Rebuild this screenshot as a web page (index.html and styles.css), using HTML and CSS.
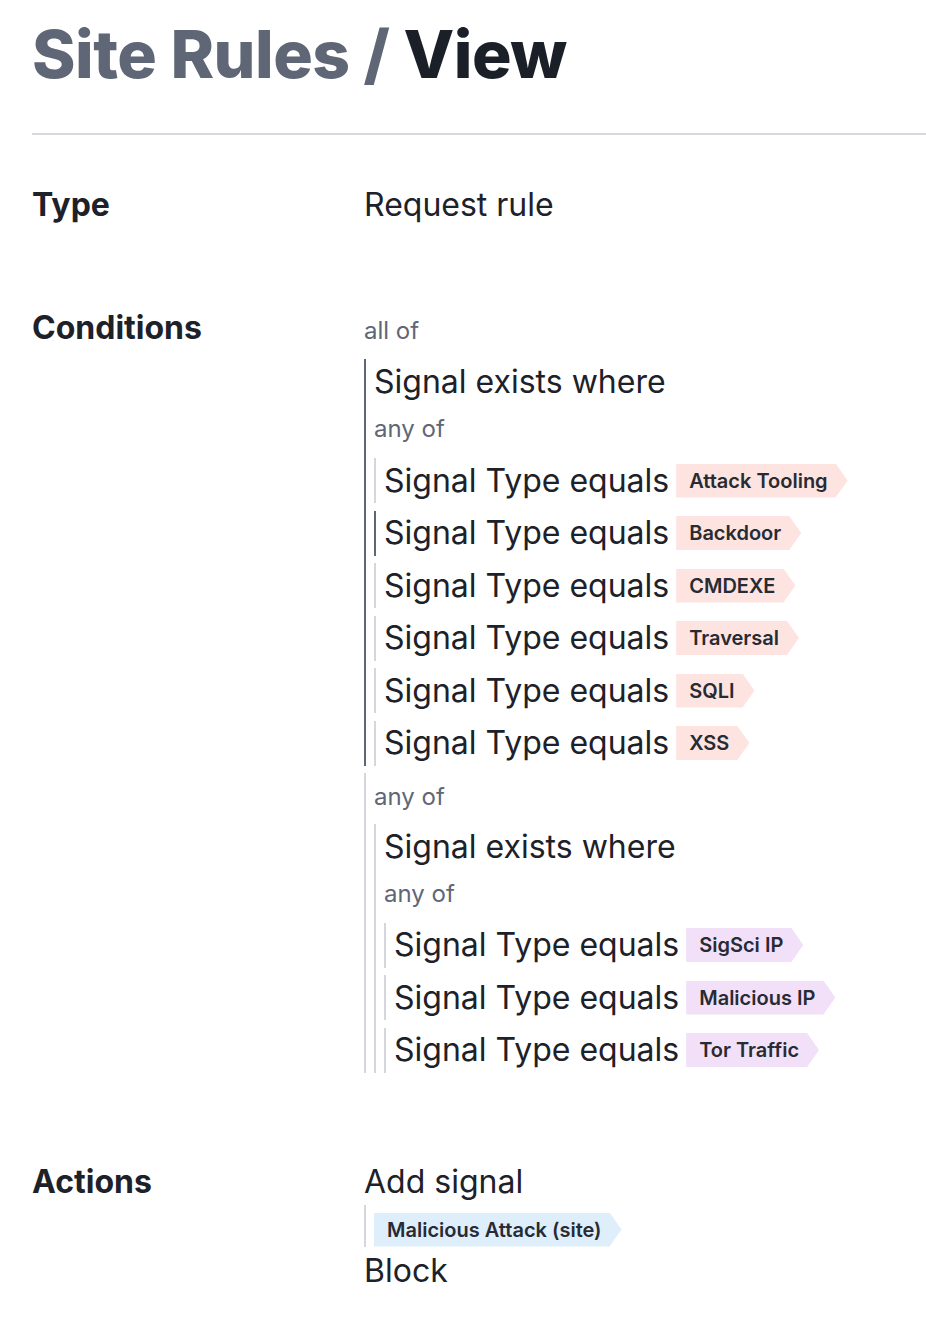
FILE: index.html
```html
<!DOCTYPE html>
<html lang="en">
<head>
<meta charset="utf-8">
<title>Site Rules / View</title>
<link rel="stylesheet" href="styles.css">
</head>
<body>
<div class="page">
  <h1 class="title"><span class="crumb">Site Rules / </span><span class="current">View</span></h1>
  <hr class="divider">

  <div class="row">
    <div class="label">Type</div>
    <div class="value"><div class="text">Request rule</div></div>
  </div>

  <div class="row">
    <div class="label">Conditions</div>
    <div class="value">
      <div class="op root">all of</div>
      <div class="list top">
        <div class="node dark">
          <div class="text">Signal exists where</div>
          <div class="op">any of</div>
          <div class="list">
            <div class="item"><span class="text">Signal Type equals</span><span class="tag pink">Attack Tooling</span></div>
            <div class="item dark"><span class="text">Signal Type equals</span><span class="tag pink">Backdoor</span></div>
            <div class="item"><span class="text">Signal Type equals</span><span class="tag pink">CMDEXE</span></div>
            <div class="item"><span class="text">Signal Type equals</span><span class="tag pink">Traversal</span></div>
            <div class="item"><span class="text">Signal Type equals</span><span class="tag pink">SQLI</span></div>
            <div class="item"><span class="text">Signal Type equals</span><span class="tag pink">XSS</span></div>
          </div>
        </div>
        <div class="node">
          <div class="op first">any of</div>
          <div class="list">
            <div class="node">
              <div class="text">Signal exists where</div>
              <div class="op">any of</div>
              <div class="list">
                <div class="item"><span class="text">Signal Type equals</span><span class="tag purple">SigSci IP</span></div>
                <div class="item"><span class="text">Signal Type equals</span><span class="tag purple">Malicious IP</span></div>
                <div class="item"><span class="text">Signal Type equals</span><span class="tag purple">Tor Traffic</span></div>
              </div>
            </div>
          </div>
        </div>
      </div>
    </div>
  </div>

  <div class="row last">
    <div class="label">Actions</div>
    <div class="value">
      <div class="text">Add signal</div>
      <div class="node action"><span class="tag blue">Malicious Attack (site)</span></div>
      <div class="text">Block</div>
    </div>
  </div>
</div>
</body>
</html>
```
FILE: styles.css
```css
html, body {
  margin: 0;
  padding: 0;
  background: #ffffff;
}

body {
  font-family: Inter, "Noto Sans", "Liberation Sans", sans-serif;
  color: #1d2129;
}

.page {
  padding: 14px 0 20px 32px;
}

.title {
  margin: 0;
  font-size: 66px;
  line-height: 80px;
  font-weight: 800;
  letter-spacing: -0.5px;
}

.crumb {
  color: #5f6676;
}

.current {
  color: #1b1f27;
}

.divider {
  border: 0;
  height: 2px;
  background: #d8d9de;
  margin: 39px 0 47px 0;
}

.row {
  display: flex;
  align-items: baseline;
  margin-bottom: 84px;
}

.row.last {
  padding-top: 2px;
  margin-bottom: 0;
}

.label {
  width: 332px;
  flex: none;
  font-size: 32px;
  line-height: 32px;
  font-weight: 700;
}

.value {
  flex: 1;
  min-width: 0;
}

.text {
  font-size: 32px;
  line-height: 46px;
  font-weight: 400;
  white-space: nowrap;
}

.op {
  font-size: 24px;
  line-height: 32px;
  color: #5f6676;
  margin: 8px 0 13px 0;
}

.op.root {
  margin: 0;
}

.op.first {
  margin-bottom: 11px;
}

.list {
  display: flex;
  flex-direction: column;
  gap: 7.5px;
}

.list.top {
  margin-top: 12px;
  gap: 7px;
}

.node {
  border-left: 2px solid #d6d7dc;
  padding-left: 8px;
}

.node.dark,
.item.dark {
  border-left-color: #5f6676;
}

.item {
  display: flex;
  align-items: center;
  gap: 7px;
  height: 45px;
  border-left: 2px solid #d6d7dc;
  padding-left: 8px;
}

.tag {
  display: inline-flex;
  align-items: center;
  height: 34px;
  padding: 0 20px 0 13px;
  font-size: 20px;
  font-weight: 600;
  color: #272b33;
  clip-path: polygon(0 0, calc(100% - 12px) 0, 100% 50%, calc(100% - 12px) 100%, 0 100%);
  white-space: nowrap;
}

.tag.pink {
  background: #fde4e1;
}

.tag.purple {
  background: #f2e0f9;
}

.tag.blue {
  background: #deeefb;
}

.node.action {
  padding-top: 8px;
  margin-bottom: 1px;
  display: flex;
}
```
